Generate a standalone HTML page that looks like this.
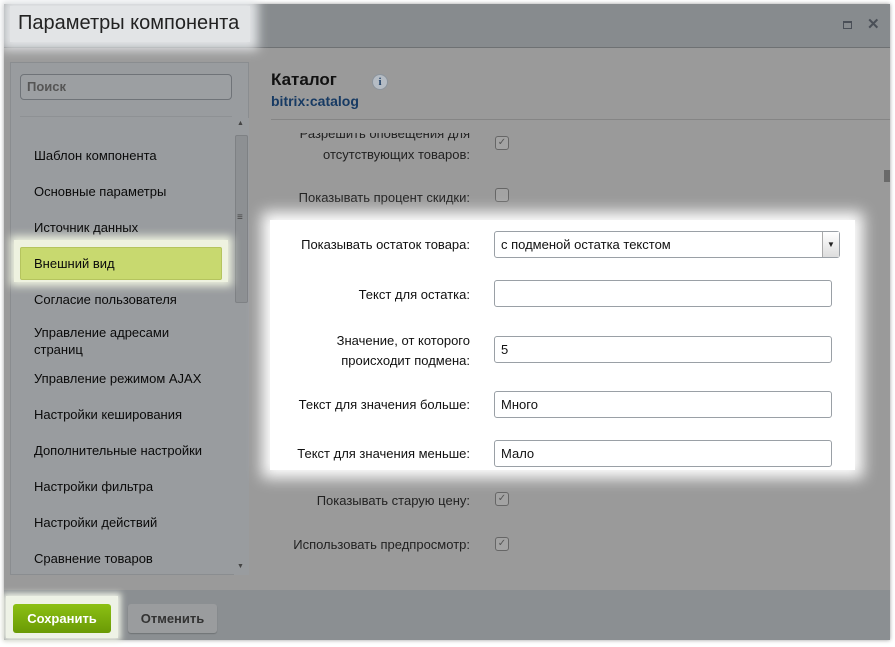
<!DOCTYPE html>
<html><head><meta charset="utf-8"><style>
*{margin:0;padding:0;box-sizing:border-box}
body{width:895px;height:647px;background:#fff;font-family:"Liberation Sans",Arial,sans-serif;position:relative;overflow:hidden;font-size:13px;color:#111}
.a{position:absolute}
.win{left:4px;top:4px;width:886px;height:636px;background:#9a9a9a;box-shadow:0 0 4px rgba(0,0,0,.4)}
.hdr{left:4px;top:4px;width:886px;height:44px;background:#878b8e;border-bottom:1px solid #6e7173}
.ftr{left:4px;top:590px;width:886px;height:50px;background:#8b8f92}
.lbl{text-align:right;width:200px;line-height:21px}
.cb{width:14px;height:14px;border:1px solid #666;border-radius:3px;background:#a3a3a3;font-size:10px;line-height:12px;text-align:center;color:#555}
.inp{left:494px;width:338px;height:27px;border:1px solid #9aa0a6;border-radius:3px;background:#fff;padding-left:6px;line-height:25px}
.nav{left:34px;color:#0a0a0a}
</style></head><body>
<div class="a win"></div>
<div class="a hdr"></div>
<div class="a" style="left:10px;top:6px;width:240px;height:36px;background:#eceef0;box-shadow:0 0 10px 8px #eceef0;opacity:.9"></div>
<div class="a" style="left:18px;top:12px;font-size:20px;color:#222">Параметры компонента</div>
<div class="a" style="left:843px;top:21px;width:9px;height:8px;border:1.5px solid #4a4f57;border-top-width:2.5px"></div>
<div class="a" style="left:867px;top:15px;font-size:15px;font-weight:bold;color:#4a4f57">✕</div>

<div class="a" style="left:10px;top:62px;width:239px;height:513px;background:#999c9f;border:1px solid #8a8d90"></div>
<div class="a" style="left:20px;top:74px;width:212px;height:26px;border:1px solid #6f7378;border-radius:4px;background:#9c9fa2;padding-left:6px;line-height:24px;font-weight:bold;color:#555">Поиск</div>
<div class="a" style="left:20px;top:116px;width:212px;height:1px;background:#8e9194"></div>
<div class="a" style="left:234px;top:118px;width:15px;height:457px;background:#999c9f"></div>
<div class="a" style="left:235px;top:135px;width:13px;height:168px;background:#8d9093;border:1px solid #7e8184;border-radius:2px"></div>
<div class="a" style="left:237px;top:120px;font-size:7px;color:#444">▲</div>
<div class="a" style="left:237px;top:563px;font-size:7px;color:#444">▼</div>
<div class="a" style="left:237px;top:212px;font-size:10px;color:#444">≡</div>
<div class="a" style="left:14px;top:240px;width:214px;height:42px;background:#eef2e0;box-shadow:0 0 8px 4px #eef2e0"></div>
<div class="a" style="left:20px;top:247px;width:202px;height:33px;background:#c8d96f;border:1px solid #b5c45e;border-radius:2px"></div>
<div class="a nav" style="top:148px">Шаблон компонента</div>
<div class="a nav" style="top:184px">Основные параметры</div>
<div class="a nav" style="top:220px">Источник данных</div>
<div class="a nav" style="top:256px">Внешний вид</div>
<div class="a nav" style="top:292px">Согласие пользователя</div>
<div class="a nav" style="top:324px;line-height:17px">Управление адресами<br>страниц</div>
<div class="a nav" style="top:371px">Управление режимом AJAX</div>
<div class="a nav" style="top:407px">Настройки кеширования</div>
<div class="a nav" style="top:443px">Дополнительные настройки</div>
<div class="a nav" style="top:479px">Настройки фильтра</div>
<div class="a nav" style="top:515px">Настройки действий</div>
<div class="a nav" style="top:551px">Сравнение товаров</div>

<div class="a" style="left:271px;top:70px;font-size:17px;font-weight:bold;color:#111">Каталог</div>
<div class="a" style="left:372px;top:74px;width:16px;height:16px;border-radius:50%;background:#b5bcc4;border:1px solid #8c949c;font-size:11px;font-weight:bold;color:#1e3f66;text-align:center;line-height:14px;font-family:'Liberation Serif',serif">i</div>
<div class="a" style="left:271px;top:93px;font-size:14px;font-weight:bold;color:#173a63">bitrix:catalog</div>
<div class="a" style="left:271px;top:119px;width:619px;height:1px;background:#858585"></div>
<div class="a" style="left:884px;top:170px;width:6px;height:12px;background:#6a6a6a"></div>
<div class="a lbl" style="left:270px;top:133px;overflow:hidden;height:33px;line-height:21px;color:#222"><div style="margin-top:-10px">Разрешить оповещения для</div>отсутствующих товаров:</div>
<div class="a cb" style="left:495px;top:136px">✓</div>
<div class="a lbl" style="left:270px;top:187px;color:#222">Показывать процент скидки:</div>
<div class="a cb" style="left:495px;top:188px"></div>

<div class="a" style="left:270px;top:220px;width:585px;height:250px;background:#fff;box-shadow:0 0 14px 8px #fff"></div>
<div class="a lbl" style="left:270px;top:234px">Показывать остаток товара:</div>
<div class="a inp" style="top:231px;width:346px">с подменой остатка текстом</div>
<div class="a" style="left:822px;top:232px;width:17px;height:25px;border-left:1px solid #aaa;background:linear-gradient(#fff,#ddd);font-size:8px;text-align:center;line-height:25px;color:#222">▼</div>
<div class="a lbl" style="left:270px;top:284px">Текст для остатка:</div>
<div class="a inp" style="top:280px"></div>
<div class="a lbl" style="left:270px;top:331px;line-height:20px">Значение, от которого<br>происходит подмена:</div>
<div class="a inp" style="top:336px">5</div>
<div class="a lbl" style="left:270px;top:394px">Текст для значения больше:</div>
<div class="a inp" style="top:391px">Много</div>
<div class="a lbl" style="left:270px;top:443px">Текст для значения меньше:</div>
<div class="a inp" style="top:440px">Мало</div>

<div class="a lbl" style="left:270px;top:490px;color:#222">Показывать старую цену:</div>
<div class="a cb" style="left:495px;top:492px">✓</div>
<div class="a lbl" style="left:270px;top:534px;color:#222">Использовать предпросмотр:</div>
<div class="a cb" style="left:495px;top:537px">✓</div>

<div class="a ftr"></div>
<div class="a" style="left:6px;top:596px;width:112px;height:42px;background:#eef2e6;box-shadow:0 0 6px 3px #eef2e6"></div>
<div class="a" style="left:13px;top:604px;width:98px;height:29px;background:linear-gradient(#8cc014,#6a9a05);border-radius:3px;color:#fff;font-weight:bold;text-align:center;line-height:29px">Сохранить</div>
<div class="a" style="left:128px;top:604px;width:89px;height:29px;background:#9a9c9e;border-radius:3px;color:#333;font-weight:bold;text-align:center;line-height:29px;box-shadow:0 1px 1px rgba(0,0,0,.2)">Отменить</div>
</body></html>
